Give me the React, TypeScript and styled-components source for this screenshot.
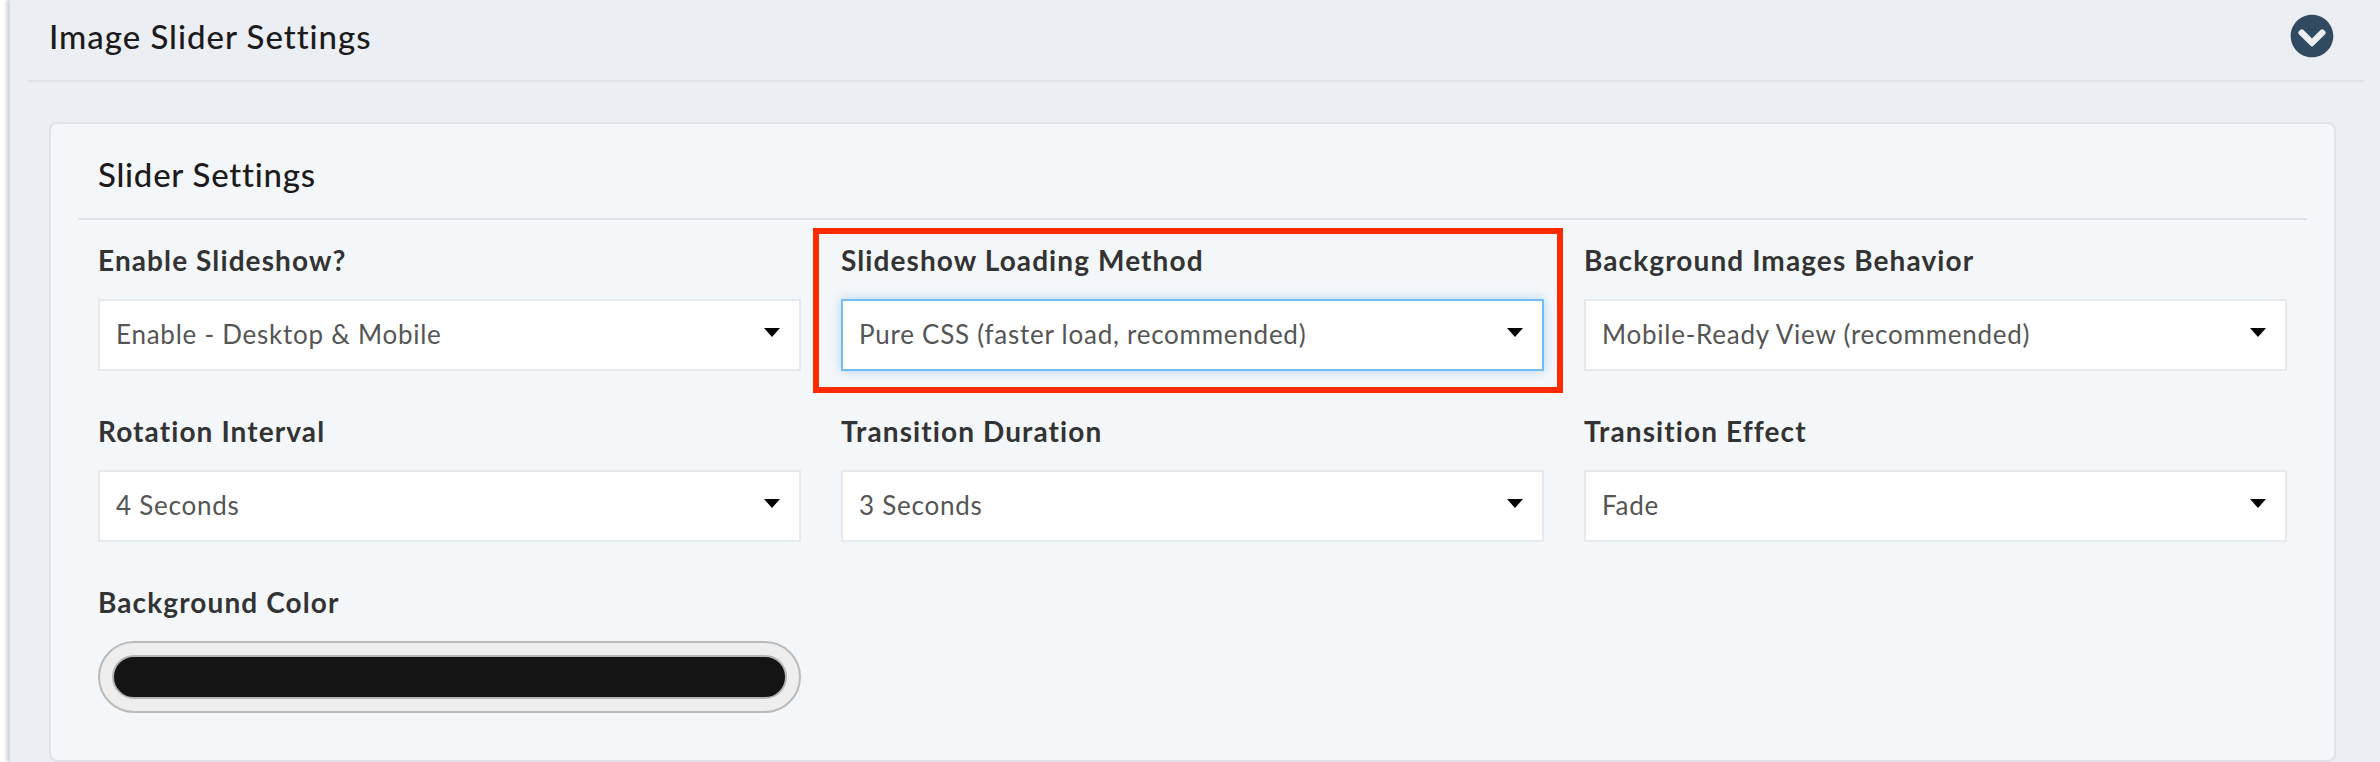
import React from "react";
import styled, { createGlobalStyle } from "styled-components";
import { FaChevronCircleDown } from "react-icons/fa";

const GlobalStyle = createGlobalStyle`
  html, body {
    margin: 0;
    padding: 0;
    height: 762px;
    overflow: hidden;
    background: #ffffff;
    font-family: "Lato", "Open Sans", sans-serif;
  }
  * {
    box-sizing: border-box;
  }
`;

const Panel = styled.div`
  margin-left: 9px;
  height: 762px;
  padding: 0 16px 0 18px;
  background: #ebeef3;
  border-left: 1px solid #d9dce0;
  box-shadow: -2px 0 4px rgba(0, 0, 0, 0.22);
`;

const PanelHeader = styled.div`
  height: 82px;
  padding: 0 30px 8px 21px;
  display: flex;
  align-items: center;
  justify-content: space-between;
  border-bottom: 2px solid #dfe2e7;
`;

const PanelTitle = styled.h2`
  margin: 0;
  font-size: 33px;
  font-weight: 500;
  letter-spacing: 0.97px;
  color: #1d1a1c;
`;

const Toggle = styled(FaChevronCircleDown)`
  width: 44px;
  height: 44px;
  color: #324a60;
`;

const Card = styled.section`
  margin: 40px 28px 0 21px;
  padding: 0 27px 47px;
  background: #f4f7fa;
  border: 2px solid #dfe2e7;
  border-radius: 8px;
`;

const CardHeader = styled.div`
  height: 96px;
  padding: 6px 20px 0;
  display: flex;
  align-items: center;
  border-bottom: 2px solid #dfe2e7;
`;

const CardTitle = styled.h3`
  margin: 0;
  font-size: 33px;
  font-weight: 500;
  letter-spacing: 0.75px;
  color: #1d1a1c;
`;

const FieldGrid = styled.div`
  padding: 22px 20px 0;
  display: grid;
  grid-template-columns: repeat(3, 703px);
  column-gap: 40px;
  row-gap: 42px;
`;

const Field = styled.div`
  position: relative;
`;

const Label = styled.div`
  height: 36px;
  margin-bottom: 21px;
  font-size: 28px;
  line-height: 36px;
  font-weight: 700;
  letter-spacing: 1.1px;
  color: #333333;
`;

const SelectBox = styled.div<{ $focused?: boolean }>`
  height: 72px;
  padding: 0 19px 0 16px;
  display: flex;
  align-items: center;
  justify-content: space-between;
  background: #ffffff;
  border: 2px solid ${(p) => (p.$focused ? "#75bbf5" : "#e7e9eb")};
  box-shadow: ${(p) => (p.$focused ? "0 0 10px rgba(90, 170, 240, 0.45)" : "none")};
`;

const SelectValue = styled.span`
  margin-bottom: 2px;
  font-size: 26px;
  letter-spacing: 0.75px;
  color: #555555;
`;

const Caret = styled.span`
  width: 0;
  height: 0;
  margin-bottom: 6px;
  border-left: 8px solid transparent;
  border-right: 8px solid transparent;
  border-top: 9px solid #000000;
`;

const Highlight = styled.div`
  position: absolute;
  top: -14px;
  bottom: -22px;
  left: -28px;
  right: -19px;
  border: 6px solid #ff2a00;
  pointer-events: none;
`;

const ColorPill = styled.div`
  height: 72px;
  padding: 12px;
  background: #eeeeee;
  border: 2px solid #bababa;
  border-radius: 36px;
`;

const ColorSwatch = styled.div`
  height: 100%;
  background: #141414;
  border: 2px solid #b5b5b5;
  border-radius: 24px;
`;

const selects = [
  { label: "Enable Slideshow?", value: "Enable - Desktop & Mobile" },
  { label: "Slideshow Loading Method", value: "Pure CSS (faster load, recommended)", focused: true },
  { label: "Background Images Behavior", value: "Mobile-Ready View (recommended)" },
  { label: "Rotation Interval", value: "4 Seconds" },
  { label: "Transition Duration", value: "3 Seconds" },
  { label: "Transition Effect", value: "Fade" },
];

const App: React.FC = () => {
  return (
    <>
      <GlobalStyle />
      <Panel>
        <PanelHeader>
          <PanelTitle>Image Slider Settings</PanelTitle>
          <Toggle />
        </PanelHeader>
        <Card>
          <CardHeader>
            <CardTitle>Slider Settings</CardTitle>
          </CardHeader>
          <FieldGrid>
            {selects.map((s) => (
              <Field key={s.label}>
                <Label>{s.label}</Label>
                <SelectBox $focused={s.focused}>
                  <SelectValue>{s.value}</SelectValue>
                  <Caret />
                </SelectBox>
                {s.focused && <Highlight />}
              </Field>
            ))}
            <Field>
              <Label>Background Color</Label>
              <ColorPill>
                <ColorSwatch />
              </ColorPill>
            </Field>
          </FieldGrid>
        </Card>
      </Panel>
    </>
  );
};

export default App;
